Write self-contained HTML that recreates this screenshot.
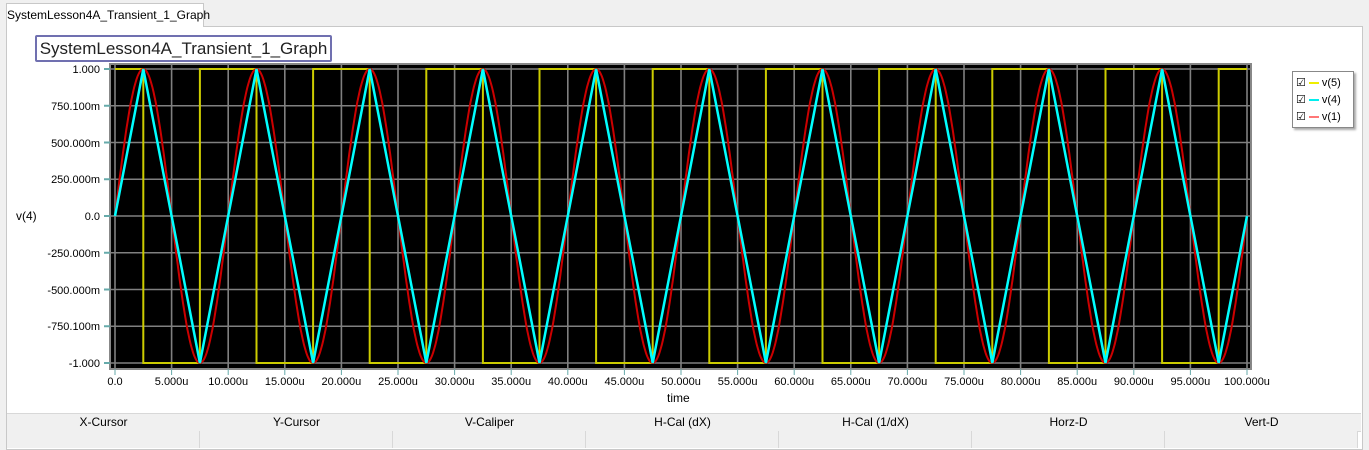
<!DOCTYPE html>
<html><head><style>
body{margin:0;width:1369px;height:450px;background:#f0f0f0;font-family:"Liberation Sans",sans-serif;position:relative;overflow:hidden}
.abs{position:absolute}
.tab{left:6px;top:3px;width:196px;height:23px;background:#fff;border:1px solid #c8c8c8;border-bottom:none;font-size:12px;line-height:23px;text-align:center}
.panel{left:6px;top:26px;width:1355px;height:422px;background:#fff;border:1px solid #c8c8c8}
.title{left:35px;top:35px;width:293px;height:23px;border:2px solid #7070b0;border-radius:2px;font-size:17px;line-height:23px;text-align:center;color:#222;background:#fff}
.yl{font-size:11px;color:#000;text-align:right;width:90px;left:10px}
.xl{font-size:11px;width:70px;text-align:center}
.hdr{top:413px;height:17px;font-size:12px;line-height:17px;text-align:center;background:#f0f0f0;border-top:1px solid #d8d8d8;border-bottom:1px solid #d8d8d8}
.row{top:431px;height:17px;background:#f0f0f0;border-right:1px solid #d8d8d8}
.lg{display:inline-block;width:10px;height:2px;vertical-align:middle;margin:0 3px}
</style></head><body>
<div class="abs panel"></div>
<div class="abs tab">SystemLesson4A_Transient_1_Graph</div>
<div class="abs title">SystemLesson4A_Transient_1_Graph</div>
<svg class="abs" style="left:0;top:0" width="1369" height="450" id="g"></svg>
<div class="abs" style="left:16px;top:209px;font-size:12px">v(4)</div>
<div class="abs" style="left:667px;top:391px;font-size:12px">time</div>
<div class="abs" style="left:1292px;top:71px;width:60px;height:55px;background:#fff;border:1px solid #888;box-shadow:2px 2px 2px #aaa;font-size:11px">
<div style="position:absolute;left:3px;top:3px;line-height:17px">
<div>☑<span class="lg" style="background:#ee0"></span>v(5)</div>
<div>☑<span class="lg" style="background:#0ee"></span>v(4)</div>
<div>☑<span class="lg" style="background:#f77"></span>v(1)</div></div></div>
<div id="lab"></div>
<div id="tbl"></div>
<script>
var s='',X=function(t){return 115+t*11.32},Y=function(v){return 216-v*147};
s+='<rect x="110" y="64" width="1141" height="305" fill="#000" stroke="#888" stroke-width="2"/>';
for(var i=0;i<=20;i++){s+='<line x1="'+X(i*5)+'" y1="64" x2="'+X(i*5)+'" y2="369" stroke="#808080" stroke-width="1.6"/>';s+='<line x1="'+X(i*5)+'" y1="369" x2="'+X(i*5)+'" y2="375" stroke="#6aa"/>';}
for(var j=-4;j<=4;j++){s+='<line x1="110" y1="'+Y(j/4)+'" x2="1251" y2="'+Y(j/4)+'" stroke="#808080" stroke-width="1.6"/>';s+='<line x1="104" y1="'+Y(j/4)+'" x2="110" y2="'+Y(j/4)+'" stroke="#6aa" stroke-width="2"/>';}
var p='M'+X(0)+' '+Y(1);
for(var k=0;k<10;k++){var a=k*10;p+=' L'+X(a+2.5)+' '+Y(1)+' L'+X(a+2.5)+' '+Y(-1)+' L'+X(a+7.5)+' '+Y(-1)+' L'+X(a+7.5)+' '+Y(1);}
p+=' L'+X(100)+' '+Y(1);
s+='<path d="'+p+'" fill="none" stroke="#cc0" stroke-width="2"/>';
var r='',c='';
for(var t=0;t<=100;t+=0.1){r+=(t?' L':'M')+X(t).toFixed(1)+' '+Y(Math.sin(t*Math.PI/5)).toFixed(1);}
for(var k=0;k<=20;k++){var t=k*5-2.5;if(t<0)t=0;var v=k==0?0:(k%2?1:-1);c+=(k?' L':'M')+X(k==0?0:t)+' '+Y(v);}
c+=' L'+X(100)+' '+Y(0);
s+='<path d="'+r+'" fill="none" stroke="#c00" stroke-width="2"/>';
s+='<path d="'+c+'" fill="none" stroke="#0ff" stroke-width="2.5"/>';
document.getElementById('g').innerHTML=s;
var l='';var yl=['1.000','750.100m','500.000m','250.000m','0.0','-250.000m','-500.000m','-750.100m','-1.000'];
for(var j=0;j<9;j++)l+='<div class="abs yl" style="top:'+(Y(1-j/4)-5)+'px">'+yl[j]+'</div>';
for(var i=0;i<=20;i++)l+='<div class="abs xl" style="left:'+(X(i*5)-35)+'px;top:376px">'+(i?(i*5)+'.000u':'0.0')+'</div>';
document.getElementById('lab').innerHTML=l;
var h=['X-Cursor','Y-Cursor','V-Caliper','H-Cal (dX)','H-Cal (1/dX)','Horz-D','Vert-D'],tb='';
tb+='<div class="abs hdr" style="left:7px;width:1354px"></div>';
for(var i=0;i<7;i++){tb+='<div class="abs" style="top:414px;left:'+(7+i*193)+'px;width:193px;text-align:center;font-size:12px;line-height:17px">'+h[i]+'</div>';tb+='<div class="abs row" style="left:'+(7+i*193)+'px;width:192px"></div>';}
document.getElementById('tbl').innerHTML=tb;
</script>
</body></html>
